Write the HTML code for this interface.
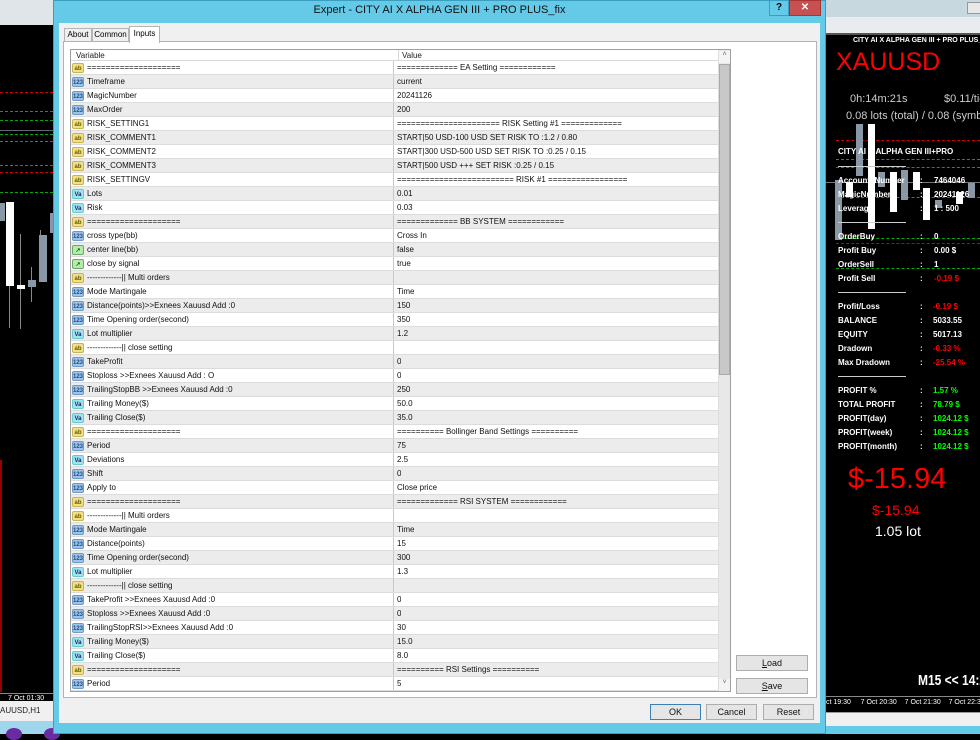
<!DOCTYPE html>
<html><head><meta charset="utf-8">
<style>
*{box-sizing:border-box;margin:0;padding:0}
body{width:980px;height:734px;overflow:hidden;background:#000;font-family:"Liberation Sans",sans-serif;position:relative}
.a{position:absolute}
.dl{position:absolute;left:0;height:0;border-top:1px dashed}
#tbl{position:absolute;left:71px;top:50px;width:647px;height:641px;background:#fff;overflow:hidden;font-size:8px;color:#111}
.r{height:14px;border-bottom:1px solid #dcdcdc;display:flex;line-height:13px;white-space:nowrap}
.r:nth-child(even){background:#ececec}
.r .v{width:323px;border-right:1px solid #c8c8c8;padding-left:1px;display:flex;align-items:center;overflow:hidden}
.r .w{padding-left:3px;overflow:hidden}
.i{display:inline-block;width:12px;height:10px;border-radius:2px;margin-right:3px;font-size:6px;line-height:10px;text-align:center;font-weight:bold;flex:none}
.ab{background:#efe08a;color:#6a5a00;border:1px solid #c9b450}
.n{background:#9cc4ea;color:#1d4d80;border:1px solid #6f9ac6}
.va{background:#9fe3ec;color:#227;border:1px solid #6cc}
.g{background:#b8eab0;color:#160;border:1px solid #6a6}
.btn{position:absolute;height:16px;background:#e5e5e5;border:1px solid #adadad;font-size:9px;text-align:center;line-height:14px;color:#111}
.rt{position:absolute;font-size:8px;font-weight:bold;color:#fff;white-space:nowrap}
</style></head><body>
<!-- left background -->
<div class="a" style="left:0;top:0;width:53px;height:25px;background:#dfe5e9"></div>
<div class="dl" style="top:92px;width:53px;border-color:#c00"></div>
<div class="dl" style="top:111px;width:53px;border-color:#0a0"></div>
<div class="dl" style="top:120px;width:53px;border-color:#0a0"></div>
<div class="a" style="left:0;top:130px;width:53px;height:1px;background:#667"></div>
<div class="dl" style="top:134px;width:53px;border-color:#0a0"></div>
<div class="dl" style="top:141px;width:53px;border-color:#0a0"></div>
<div class="dl" style="top:165px;width:53px;border-color:#0a0"></div>
<div class="dl" style="top:172px;width:53px;border-color:#c00"></div>
<div class="dl" style="top:192px;width:53px;border-color:#0a0"></div>
<div class="a" style="left:0;top:203px;width:5px;height:18px;background:#8a97a6"></div>
<div class="a" style="left:6px;top:202px;width:8px;height:84px;background:#fff"></div>
<div class="a" style="left:9px;top:286px;width:1px;height:42px;background:#888"></div>
<div class="a" style="left:20px;top:234px;width:1px;height:95px;background:#888"></div>
<div class="a" style="left:17px;top:285px;width:8px;height:4px;background:#fff"></div>
<div class="a" style="left:31px;top:267px;width:1px;height:35px;background:#888"></div>
<div class="a" style="left:28px;top:280px;width:8px;height:7px;background:#8a97a6"></div>
<div class="a" style="left:40px;top:230px;width:1px;height:52px;background:#888"></div>
<div class="a" style="left:39px;top:235px;width:8px;height:47px;background:#8a97a6"></div>
<div class="a" style="left:50px;top:213px;width:3px;height:20px;background:#8a97a6"></div>
<div class="a" style="left:0;top:460px;width:2px;height:232px;background:#900"></div>
<div class="a" style="left:0;top:693px;width:53px;height:1px;background:#888"></div>
<div class="a" style="left:8px;top:695px;font-size:7px;color:#fff">7 Oct 01:30</div>
<div class="a" style="left:0;top:701px;width:53px;height:20px;background:#f0f0f0;font-size:8px;line-height:20px;color:#222">AUUSD,H1</div>
<div class="a" style="left:0;top:721px;width:980px;height:13px;background:#9fd6ec"></div>
<div class="a" style="left:6px;top:728px;width:16px;height:12px;border-radius:50%;background:#6a2aa0"></div>
<div class="a" style="left:44px;top:728px;width:16px;height:12px;border-radius:50%;background:#6a2aa0"></div>

<!-- right background -->
<div class="a" style="left:826px;top:0;width:154px;height:33px;background:#e9ecee"></div>
<div class="a" style="left:826px;top:0;width:154px;height:17px;background:#c7d8df"></div>
<div class="a" style="left:967px;top:2px;width:14px;height:12px;background:#e8e8e8;border:1px solid #999"></div>
<div class="a" style="left:826px;top:33px;width:154px;height:2px;background:#555"></div>
<div class="rt" style="left:853px;top:37px;font-size:7px">CITY AI X ALPHA GEN III + PRO PLUS_fix</div>
<div class="a" style="left:836px;top:48px;font-size:25px;color:#f00">XAUUSD</div>
<div class="a" style="left:850px;top:93px;font-size:11px;color:#ccc">0h:14m:21s</div>
<div class="a" style="left:944px;top:93px;font-size:11px;color:#ccc;white-space:nowrap">$0.11/tick</div>
<div class="a" style="left:846px;top:110px;font-size:11px;color:#ccc;white-space:nowrap">0.08 lots (total) / 0.08 (symbol)</div>
<div class="dl" style="left:836px;top:140px;width:144px;border-color:#c00"></div>
<div class="dl" style="left:836px;top:159px;width:144px;border-color:#0a0"></div>
<div class="dl" style="left:836px;top:167px;width:144px;border-color:#0a0"></div>
<div class="dl" style="left:836px;top:197px;width:144px;border-color:#0a0"></div>
<div class="dl" style="left:836px;top:238px;width:144px;border-color:#0a0"></div>
<div class="dl" style="left:836px;top:243px;width:144px;border-color:#c00"></div>
<div class="dl" style="left:836px;top:268px;width:144px;border-color:#0a0"></div>
<div class="a" style="left:826px;top:182px;width:154px;height:1px;background:#777"></div>
<div class="a" style="left:835px;top:180px;width:7px;height:60px;background:#8a97a6"></div>
<div class="a" style="left:846px;top:182px;width:7px;height:15px;background:#fff"></div>
<div class="a" style="left:856px;top:124px;width:7px;height:52px;background:#8a97a6"></div>
<div class="a" style="left:868px;top:124px;width:7px;height:105px;background:#fff"></div>
<div class="a" style="left:878px;top:172px;width:7px;height:15px;background:#8a97a6"></div>
<div class="a" style="left:890px;top:172px;width:7px;height:40px;background:#fff"></div>
<div class="a" style="left:901px;top:170px;width:7px;height:30px;background:#8a97a6"></div>
<div class="a" style="left:913px;top:172px;width:7px;height:18px;background:#fff"></div>
<div class="a" style="left:923px;top:188px;width:7px;height:32px;background:#fff"></div>
<div class="a" style="left:935px;top:200px;width:7px;height:8px;background:#8a97a6"></div>
<div class="a" style="left:956px;top:192px;width:7px;height:12px;background:#fff"></div>
<div class="a" style="left:968px;top:183px;width:7px;height:15px;background:#8a97a6"></div>
<div class="rt" style="left:838px;top:147px">CITY AI X ALPHA GEN III+PRO</div>
<div class="a" style="left:838px;top:166px;width:68px;height:1px;background:#ccc"></div>
<div class="rt" style="left:838px;top:176px">Account_Number</div><div class="rt" style="left:920px;top:176px">:</div><div class="rt" style="left:934px;top:176px">7464046</div>
<div class="rt" style="left:838px;top:190px">MagicNumber</div><div class="rt" style="left:920px;top:190px">:</div><div class="rt" style="left:934px;top:190px">20241126</div>
<div class="rt" style="left:838px;top:204px">Leverage</div><div class="rt" style="left:920px;top:204px">:</div><div class="rt" style="left:934px;top:204px">1 : 500</div>
<div class="a" style="left:838px;top:222px;width:68px;height:1px;background:#ccc"></div>
<div class="rt" style="left:838px;top:232px">OrderBuy</div><div class="rt" style="left:920px;top:232px">:</div><div class="rt" style="left:934px;top:232px">0</div>
<div class="rt" style="left:838px;top:246px">Profit Buy</div><div class="rt" style="left:920px;top:246px">:</div><div class="rt" style="left:934px;top:246px">0.00 $</div>
<div class="rt" style="left:838px;top:260px">OrderSell</div><div class="rt" style="left:920px;top:260px">:</div><div class="rt" style="left:934px;top:260px">1</div>
<div class="rt" style="left:838px;top:274px">Profit Sell</div><div class="rt" style="left:920px;top:274px">:</div><div class="rt" style="left:934px;top:274px;color:#f00">-0.19 $</div>
<div class="a" style="left:838px;top:292px;width:68px;height:1px;background:#ccc"></div>
<div class="rt" style="left:838px;top:302px">Profit/Loss</div><div class="rt" style="left:920px;top:302px">:</div><div class="rt" style="left:933px;top:302px;color:#f00">-0.19 $</div>
<div class="rt" style="left:838px;top:316px">BALANCE</div><div class="rt" style="left:920px;top:316px">:</div><div class="rt" style="left:933px;top:316px">5033.55</div>
<div class="rt" style="left:838px;top:330px">EQUITY</div><div class="rt" style="left:920px;top:330px">:</div><div class="rt" style="left:933px;top:330px">5017.13</div>
<div class="rt" style="left:838px;top:344px">Dradown</div><div class="rt" style="left:920px;top:344px">:</div><div class="rt" style="left:933px;top:344px;color:#f00">-0.33 %</div>
<div class="rt" style="left:838px;top:358px">Max Dradown</div><div class="rt" style="left:920px;top:358px">:</div><div class="rt" style="left:933px;top:358px;color:#f00">-25.54 %</div>
<div class="a" style="left:838px;top:376px;width:68px;height:1px;background:#ccc"></div>
<div class="rt" style="left:838px;top:386px">PROFIT %</div><div class="rt" style="left:920px;top:386px">:</div><div class="rt" style="left:933px;top:386px;color:#0f0">1.57 %</div>
<div class="rt" style="left:838px;top:400px">TOTAL PROFIT</div><div class="rt" style="left:920px;top:400px">:</div><div class="rt" style="left:933px;top:400px;color:#0f0">78.79 $</div>
<div class="rt" style="left:838px;top:414px">PROFIT(day)</div><div class="rt" style="left:920px;top:414px">:</div><div class="rt" style="left:933px;top:414px;color:#0f0">1024.12 $</div>
<div class="rt" style="left:838px;top:428px">PROFIT(week)</div><div class="rt" style="left:920px;top:428px">:</div><div class="rt" style="left:933px;top:428px;color:#0f0">1024.12 $</div>
<div class="rt" style="left:838px;top:442px">PROFIT(month)</div><div class="rt" style="left:920px;top:442px">:</div><div class="rt" style="left:933px;top:442px;color:#0f0">1024.12 $</div>
<div class="a" style="left:848px;top:463px;font-size:29px;color:#f00">$-15.94</div>
<div class="a" style="left:872px;top:502px;font-size:14px;color:#f00">$-15.94</div>
<div class="a" style="left:875px;top:523px;font-size:14px;color:#fff">1.05 lot</div>
<div class="a" style="left:918px;top:672px;font-size:15px;font-weight:bold;color:#fff;white-space:nowrap;transform:scaleX(.8);transform-origin:left">M15 &lt;&lt; 14:20</div>
<div class="a" style="left:826px;top:696px;width:154px;height:1px;background:#888"></div>
<div class="a" style="left:826px;top:699px;font-size:7px;color:#fff;white-space:nowrap">ct 19:30 &nbsp;&nbsp;&nbsp; 7 Oct 20:30 &nbsp;&nbsp; 7 Oct 21:30 &nbsp;&nbsp; 7 Oct 22:30</div>
<div class="a" style="left:826px;top:712px;width:154px;height:14px;background:#f0f0f0;border-top:1px solid #999"></div>
<div class="a" style="left:826px;top:726px;width:154px;height:8px;background:#65c9e8"></div>

<!-- dialog -->
<div class="a" style="left:53px;top:0;width:773px;height:734px;background:#65c9e8;border:1px solid #3a9ec0"></div>
<div class="a" style="left:53px;top:4px;width:773px;text-align:center;font-size:11px;color:#111">Expert - CITY AI X ALPHA GEN III + PRO PLUS_fix</div>
<div class="a" style="left:769px;top:0;width:20px;height:16px;background:#65c9e8;border:1px solid #3a9ec0;font-size:10px;font-weight:bold;text-align:center;line-height:14px">?</div>
<div class="a" style="left:789px;top:0;width:32px;height:16px;background:#c75050;border:1px solid #a33;font-size:10px;font-weight:bold;text-align:center;line-height:14px;color:#fff">✕</div>
<div class="a" style="left:59px;top:23px;width:761px;height:700px;background:#f0f0f0"></div>
<div class="a" style="left:63px;top:41px;width:754px;height:657px;background:#fff;border:1px solid #b4b4b4"></div>
<div class="a" style="left:64px;top:28px;width:28px;height:14px;border:1px solid #b4b4b4;background:#f0f0f0;font-size:8px;text-align:center;line-height:12px">About</div>
<div class="a" style="left:92px;top:28px;width:37px;height:14px;border:1px solid #b4b4b4;background:#f0f0f0;font-size:8px;text-align:center;line-height:12px">Common</div>
<div class="a" style="left:129px;top:26px;width:31px;height:17px;border:1px solid #b4b4b4;border-bottom:none;background:#fff;font-size:8px;text-align:center;line-height:14px">Inputs</div>
<div class="a" style="left:70px;top:49px;width:661px;height:643px;border:1px solid #a0a0a0"></div>
<div class="a" style="left:71px;top:50px;width:647px;height:11px;background:#fff;border-bottom:1px solid #d8d8d8;font-size:8px;line-height:11px;color:#222"><span style="position:absolute;left:5px">Variable</span><span style="position:absolute;left:327px;border-left:1px solid #d8d8d8;padding-left:3px;height:11px">Value</span></div>
<div id="tbl" style="top:61px;height:630px">
<div class="r"><div class="v"><span class="i ab">ab</span>====================</div><div class="w">============= EA Setting ============</div></div>
<div class="r"><div class="v"><span class="i n">123</span>Timeframe</div><div class="w">current</div></div>
<div class="r"><div class="v"><span class="i n">123</span>MagicNumber</div><div class="w">20241126</div></div>
<div class="r"><div class="v"><span class="i n">123</span>MaxOrder</div><div class="w">200</div></div>
<div class="r"><div class="v"><span class="i ab">ab</span>RISK_SETTING1</div><div class="w">====================== RISK Setting #1 =============</div></div>
<div class="r"><div class="v"><span class="i ab">ab</span>RISK_COMMENT1</div><div class="w">START|50 USD-100 USD SET RISK TO :1.2 / 0.80</div></div>
<div class="r"><div class="v"><span class="i ab">ab</span>RISK_COMMENT2</div><div class="w">START|300 USD-500 USD SET RISK TO :0.25 / 0.15</div></div>
<div class="r"><div class="v"><span class="i ab">ab</span>RISK_COMMENT3</div><div class="w">START|500 USD +++ SET RISK :0.25 / 0.15</div></div>
<div class="r"><div class="v"><span class="i ab">ab</span>RISK_SETTINGV</div><div class="w">========================= RISK #1 =================</div></div>
<div class="r"><div class="v"><span class="i va">Va</span>Lots</div><div class="w">0.01</div></div>
<div class="r"><div class="v"><span class="i va">Va</span>Risk</div><div class="w">0.03</div></div>
<div class="r"><div class="v"><span class="i ab">ab</span>====================</div><div class="w">============= BB SYSTEM ============</div></div>
<div class="r"><div class="v"><span class="i n">123</span>cross type(bb)</div><div class="w">Cross In</div></div>
<div class="r"><div class="v"><span class="i g">↗</span>center line(bb)</div><div class="w">false</div></div>
<div class="r"><div class="v"><span class="i g">↗</span>close by signal</div><div class="w">true</div></div>
<div class="r"><div class="v"><span class="i ab">ab</span>-------------|| Multi orders</div><div class="w"></div></div>
<div class="r"><div class="v"><span class="i n">123</span>Mode Martingale</div><div class="w">Time</div></div>
<div class="r"><div class="v"><span class="i n">123</span>Distance(points)&gt;&gt;Exnees Xauusd Add :0</div><div class="w">150</div></div>
<div class="r"><div class="v"><span class="i n">123</span>Time Opening order(second)</div><div class="w">350</div></div>
<div class="r"><div class="v"><span class="i va">Va</span>Lot multiplier</div><div class="w">1.2</div></div>
<div class="r"><div class="v"><span class="i ab">ab</span>-------------|| close setting</div><div class="w"></div></div>
<div class="r"><div class="v"><span class="i n">123</span>TakeProfit</div><div class="w">0</div></div>
<div class="r"><div class="v"><span class="i n">123</span>Stoploss &gt;&gt;Exnees Xauusd Add : O</div><div class="w">0</div></div>
<div class="r"><div class="v"><span class="i n">123</span>TrailingStopBB &gt;&gt;Exnees Xauusd Add :0</div><div class="w">250</div></div>
<div class="r"><div class="v"><span class="i va">Va</span>Trailing Money($)</div><div class="w">50.0</div></div>
<div class="r"><div class="v"><span class="i va">Va</span>Trailing Close($)</div><div class="w">35.0</div></div>
<div class="r"><div class="v"><span class="i ab">ab</span>====================</div><div class="w">========== Bollinger Band Settings ==========</div></div>
<div class="r"><div class="v"><span class="i n">123</span>Period</div><div class="w">75</div></div>
<div class="r"><div class="v"><span class="i va">Va</span>Deviations</div><div class="w">2.5</div></div>
<div class="r"><div class="v"><span class="i n">123</span>Shift</div><div class="w">0</div></div>
<div class="r"><div class="v"><span class="i n">123</span>Apply to</div><div class="w">Close price</div></div>
<div class="r"><div class="v"><span class="i ab">ab</span>====================</div><div class="w">============= RSI SYSTEM ============</div></div>
<div class="r"><div class="v"><span class="i ab">ab</span>-------------|| Multi orders</div><div class="w"></div></div>
<div class="r"><div class="v"><span class="i n">123</span>Mode Martingale</div><div class="w">Time</div></div>
<div class="r"><div class="v"><span class="i n">123</span>Distance(points)</div><div class="w">15</div></div>
<div class="r"><div class="v"><span class="i n">123</span>Time Opening order(second)</div><div class="w">300</div></div>
<div class="r"><div class="v"><span class="i va">Va</span>Lot multiplier</div><div class="w">1.3</div></div>
<div class="r"><div class="v"><span class="i ab">ab</span>-------------|| close setting</div><div class="w"></div></div>
<div class="r"><div class="v"><span class="i n">123</span>TakeProfit &gt;&gt;Exnees Xauusd Add :0</div><div class="w">0</div></div>
<div class="r"><div class="v"><span class="i n">123</span>Stoploss &gt;&gt;Exnees Xauusd Add :0</div><div class="w">0</div></div>
<div class="r"><div class="v"><span class="i n">123</span>TrailingStopRSI&gt;&gt;Exnees Xauusd Add :0</div><div class="w">30</div></div>
<div class="r"><div class="v"><span class="i va">Va</span>Trailing Money($)</div><div class="w">15.0</div></div>
<div class="r"><div class="v"><span class="i va">Va</span>Trailing Close($)</div><div class="w">8.0</div></div>
<div class="r"><div class="v"><span class="i ab">ab</span>====================</div><div class="w">========== RSI Settings ==========</div></div>
<div class="r"><div class="v"><span class="i n">123</span>Period</div><div class="w">5</div></div>
</div>
<!-- scrollbar -->
<div class="a" style="left:718px;top:50px;width:12px;height:641px;background:#e8e8e8;border-left:1px solid #ddd"></div>
<div class="a" style="left:719px;top:51px;width:11px;height:12px;background:#f4f4f4;font-size:7px;text-align:center;color:#666">˄</div>
<div class="a" style="left:719px;top:64px;width:11px;height:311px;background:#c8c8c8;border:1px solid #aaa"></div>
<div class="a" style="left:719px;top:679px;width:11px;height:12px;background:#f4f4f4;font-size:7px;text-align:center;color:#666">˅</div>

<div class="btn" style="left:736px;top:655px;width:72px"><u>L</u>oad</div>
<div class="btn" style="left:736px;top:678px;width:72px"><u>S</u>ave</div>
<div class="btn" style="left:650px;top:704px;width:51px;border-color:#3c7fb1">OK</div>
<div class="btn" style="left:706px;top:704px;width:51px">Cancel</div>
<div class="btn" style="left:763px;top:704px;width:51px">Reset</div>
</body></html>
